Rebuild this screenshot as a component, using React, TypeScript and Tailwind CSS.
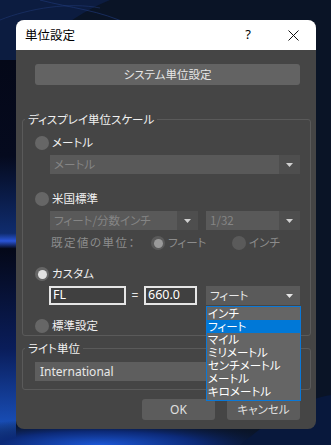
import { ReactNode } from 'react';

const jp = "font-['Noto_Sans_CJK_JP','Noto_Sans',sans-serif] [font-feature-settings:'palt']";

function Wallpaper() {
    return (
        <svg className="absolute inset-0" width="331" height="445" viewBox="0 0 331 445">
            <defs>
                <linearGradient id="wl" x1="0" y1="0" x2="0" y2="1">
                    <stop offset="0" stopColor="#040818" />
                    <stop offset="0.25" stopColor="#050a1e" />
                    <stop offset="0.45" stopColor="#0f2c6e" />
                    <stop offset="0.47" stopColor="#2a55d8" />
                    <stop offset="0.49" stopColor="#040818" />
                    <stop offset="0.75" stopColor="#0a1d5a" />
                    <stop offset="1" stopColor="#1c5bd0" />
                </linearGradient>
                <radialGradient id="wb" cx="0.3" cy="1" r="0.6">
                    <stop offset="0" stopColor="#1b57d6" />
                    <stop offset="0.5" stopColor="#0c2a78" />
                    <stop offset="1" stopColor="#0a1428" stopOpacity="0" />
                </radialGradient>
            </defs>
            <rect width="331" height="445" fill="#0a1426" />
            <path d="M0 0 H110 C60 20 20 60 0 110 Z" fill="#0c1c40" />
            <path d="M40 0 C70 8 100 10 130 25" stroke="#1d3570" strokeWidth="1" fill="none" opacity="0.7" />
            <path d="M0 20 C30 8 70 2 100 8" stroke="#223c7c" strokeWidth="1" fill="none" opacity="0.5" />
            <rect x="0" y="60" width="16" height="385" fill="url(#wl)" />
            <rect x="0" y="400" width="331" height="45" fill="url(#wb)" />
            <path d="M240 445 C270 420 300 400 331 395 V445 Z" fill="#08183c" />
        </svg>
    );
}

function Radio({ checked, disabled }: { checked?: boolean; disabled?: boolean }) {
    return (
        <span
            className={`flex h-[14px] w-[14px] shrink-0 items-center justify-center rounded-full ${
                disabled ? 'bg-[#5a5a5a]' : 'bg-[#666666]'
            }`}
        >
            {checked && (
                <span
                    className={`h-[9px] w-[9px] rounded-full ${disabled ? 'bg-[#9a9a9a]' : 'bg-[#e2e2e2]'}`}
                />
            )}
        </span>
    );
}

function Arrow({ color = '#e6e6e6' }: { color?: string }) {
    return (
        <svg width="7" height="4" viewBox="0 0 7 4">
            <path d="M0 0 H7 L3.5 4 Z" fill={color} />
        </svg>
    );
}

function Select({
    label,
    disabled,
    className = '',
}: {
    label: string;
    disabled?: boolean;
    className?: string;
}) {
    return (
        <div
            className={`flex h-[19px] items-center ${disabled ? 'bg-[#595959]' : 'bg-[#5a5a5a]'} ${className}`}
        >
            <span className={`flex-1 pl-[4px] text-[11.5px] leading-none ${disabled ? 'text-[#858585]' : 'text-[#e8e8e8]'}`}>
                {label}
            </span>
            <span
                className={`flex h-full w-[21px] items-center justify-center ${disabled ? 'bg-[#4e4e4e]' : ''}`}
            >
                <Arrow color={disabled ? '#d0d0d0' : '#e6e6e6'} />
            </span>
        </div>
    );
}

function Group({ title, children, className = '' }: { title: string; children: ReactNode; className?: string }) {
    return (
        <div className={`relative mx-[6px] mr-[5px] rounded-[3px] border border-[#5a5a5a] ${className}`}>
            <span className="absolute -top-[9px] left-[2px] bg-[#454545] px-[3px] text-[11.5px] leading-[16px] text-[#f0f0f0]">
                {title}
            </span>
            {children}
        </div>
    );
}

const units = ['インチ', 'フィート', 'マイル', 'ミリメートル', 'センチメートル', 'メートル', 'キロメートル'];

export default function App() {
    return (
        <div className={`relative h-[445px] w-[331px] overflow-hidden ${jp}`}>
            <Wallpaper />
            <div className="relative pl-[16px] pt-[20px]">
                <div className="flex h-[409px] w-[300px] flex-col overflow-hidden rounded-[8px] bg-[#454545]">
                    <div className="flex h-[30px] items-center bg-white pl-[9px] pr-[17px] text-black">
                        <span className="flex-1 text-[12.5px]">単位設定</span>
                        <span className="mr-[37px] font-['Noto_Sans',sans-serif] text-[13px]">?</span>
                        <svg width="11" height="11" viewBox="0 0 11 11">
                            <path d="M0.5 0.5 L10.5 10.5 M10.5 0.5 L0.5 10.5" stroke="#111" strokeWidth="1" />
                        </svg>
                    </div>

                    <div className="relative flex flex-1 flex-col">
                        <button className="ml-[19px] mr-[16px] mt-[14px] h-[21px] rounded-[3px] bg-[#636363] text-[11.5px] leading-none text-[#e6e6e6]">
                            システム単位設定
                        </button>

                        <Group title="ディスプレイ単位スケール" className="mt-[34px] h-[217px] pl-[12px] pr-[10px] pt-[16px]">
                            <div className="flex h-[14px] items-center gap-[3px] text-[11.5px] text-[#f0f0f0]">
                                <Radio />
                                メートル
                            </div>
                            <Select label="メートル" disabled className="ml-[15px] mt-[5px]" />

                            <div className="mt-[18px] flex h-[14px] items-center gap-[3px] text-[11.5px] text-[#f0f0f0]">
                                <Radio />
                                米国標準
                            </div>
                            <div className="ml-[15px] mt-[5px] flex gap-[8px]">
                                <Select label="フィート/分数インチ" disabled className="w-[148px]" />
                                <Select label="1/32" disabled className="flex-1" />
                            </div>
                            <div className="ml-[16px] mt-[6px] flex h-[14px] items-center text-[11.5px] text-[#8c8c8c]">
                                <span className="w-[100px] tracking-[1.5px]">既定値の単位：</span>
                                <span className="flex w-[81px] items-center gap-[3px]">
                                    <Radio checked disabled />
                                    フィート
                                </span>
                                <span className="flex items-center gap-[3px]">
                                    <Radio disabled />
                                    インチ
                                </span>
                            </div>

                            <div className="mt-[17px] flex h-[14px] items-center gap-[3px] text-[11.5px] text-[#f0f0f0]">
                                <Radio checked />
                                カスタム
                            </div>
                            <div className="ml-[14px] mt-[5px] flex h-[19px] items-center">
                                <div className="flex h-full w-[77px] items-center border-2 border-[#e6e6e6] bg-[#404040] pl-[2px] font-['Noto_Sans',sans-serif] text-[12.5px] text-white">
                                    FL
                                </div>
                                <span className="w-[18px] text-center font-['Noto_Sans',sans-serif] text-[12px] text-[#e8e8e8]">=</span>
                                <div className="flex h-full w-[53px] items-center border-2 border-[#e6e6e6] bg-[#404040] pl-[2px] font-['Noto_Sans',sans-serif] text-[12.5px] text-white">
                                    660.0
                                </div>
                                <div className="relative ml-[9px] h-full flex-1">
                                    <Select label="フィート" className="h-full" />
                                    <div className="absolute left-0 top-[20px] z-10 w-[95px] border border-[#0a78d7] bg-[#656565] pb-[2px]">
                                        {units.map((u, i) => (
                                            <div
                                                key={u}
                                                className={`flex h-[13px] items-center pl-[1px] text-[11.5px] leading-[13px] text-white ${
                                                    i === 1 ? 'bg-[#0078d7]' : ''
                                                }`}
                                            >
                                                {u}
                                            </div>
                                        ))}
                                    </div>
                                </div>
                            </div>

                            <div className="mt-[14px] flex h-[14px] items-center gap-[3px] text-[11.5px] text-[#f0f0f0]">
                                <Radio />
                                標準設定
                            </div>
                        </Group>

                        <Group title="ライト単位" className="mt-[12px] h-[42px] pl-[12px] pr-[10px] pt-[13px]">
                            <div className="flex h-[19px] items-center bg-[#5e5e5e] pl-[5px] font-['Noto_Sans',sans-serif] text-[12px] text-[#e8e8e8]">
                                International
                            </div>
                        </Group>

                        <div className="mr-[16px] mt-[9px] flex justify-end gap-[12px]">
                            <button className="h-[21px] w-[73px] rounded-[3px] bg-[#5c5c5c] font-['Noto_Sans',sans-serif] text-[12px] text-[#e0e0e0]">
                                OK
                            </button>
                            <button className="h-[21px] w-[73px] rounded-[3px] bg-[#5c5c5c] text-[11.5px] text-[#e0e0e0]">
                                キャンセル
                            </button>
                        </div>
                    </div>
                </div>
            </div>
        </div>
    );
}
